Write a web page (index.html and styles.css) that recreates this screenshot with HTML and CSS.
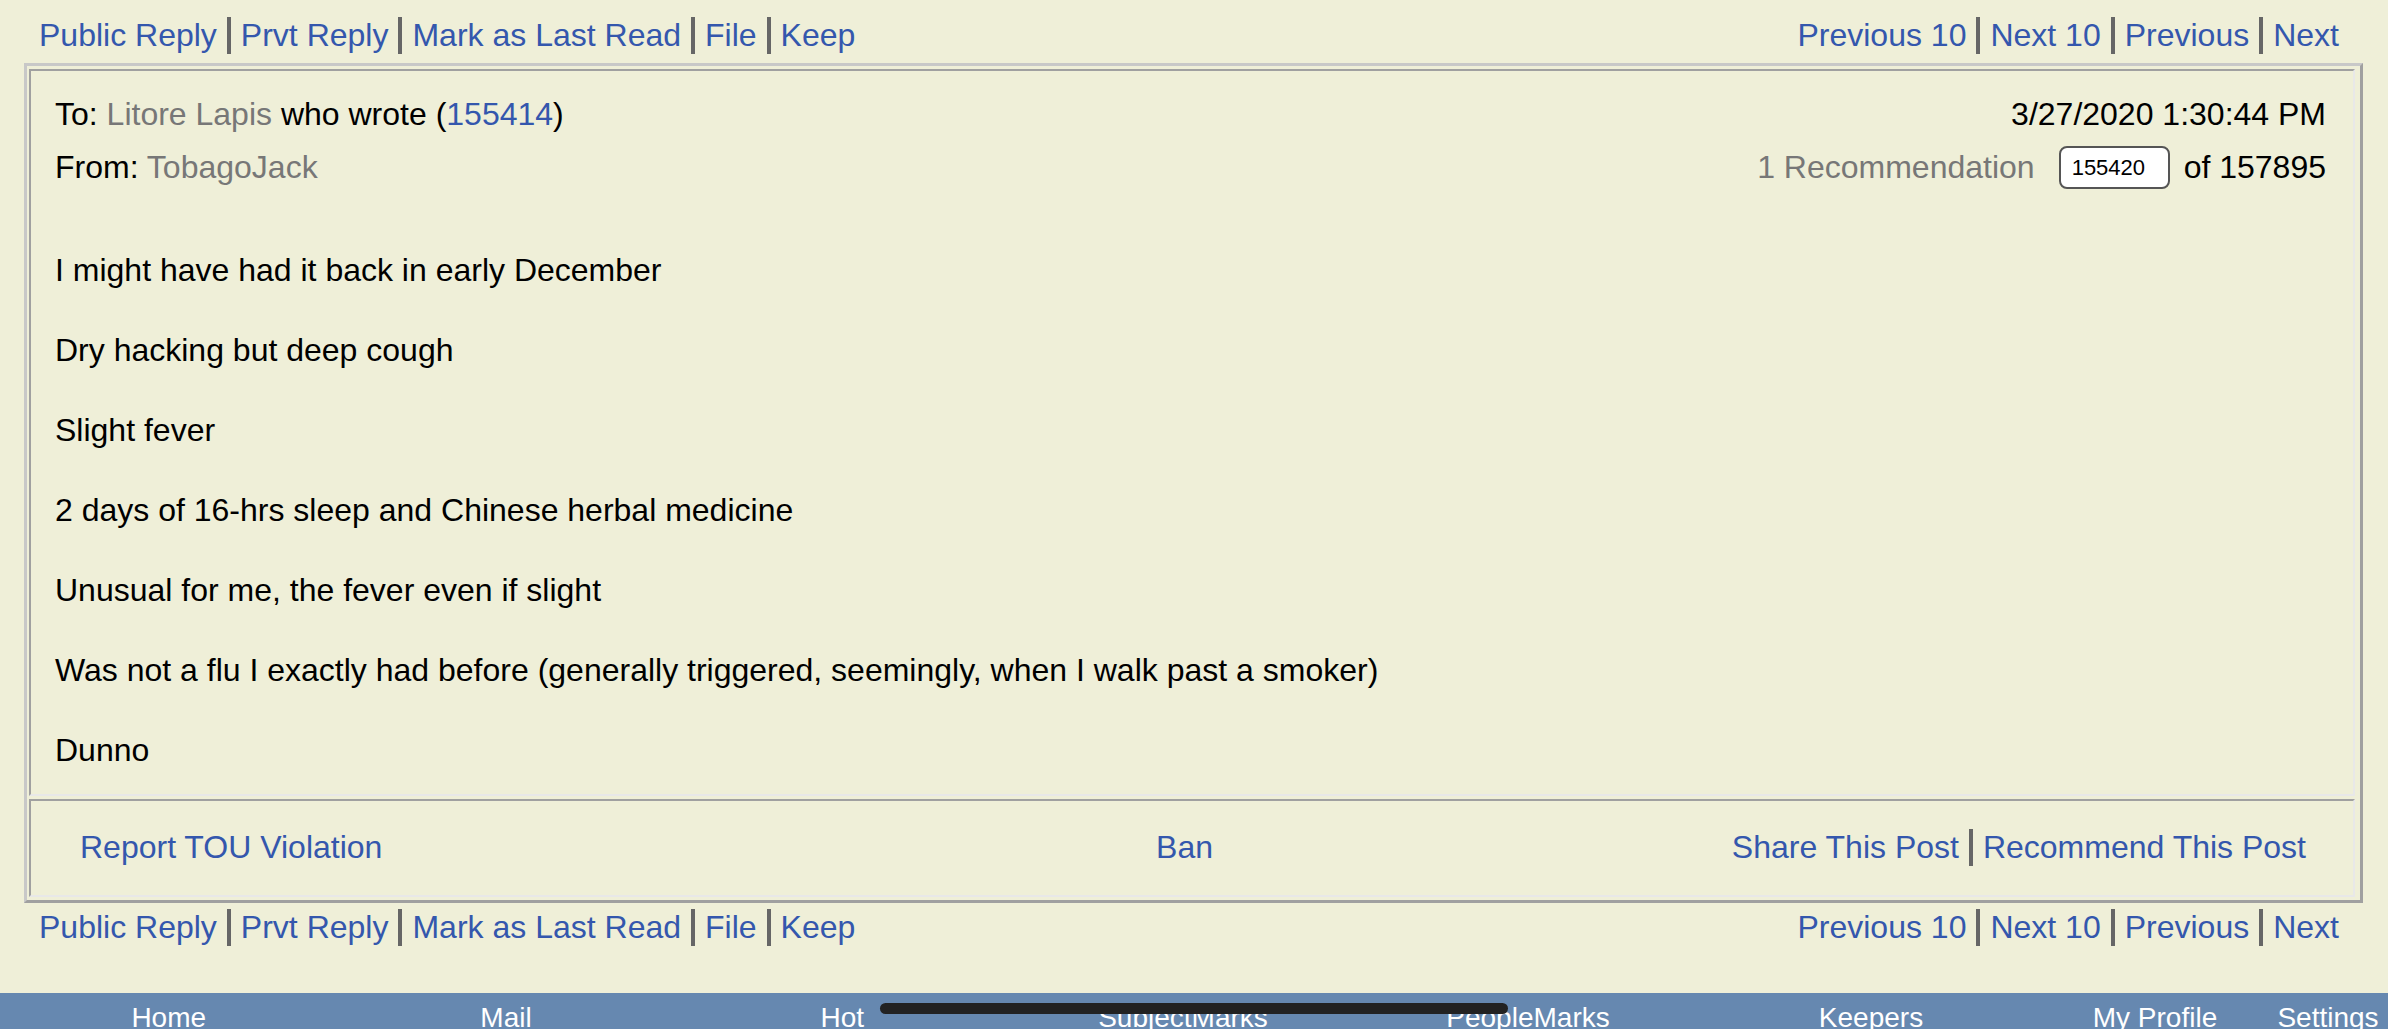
FILE: index.html
```html
<!DOCTYPE html>
<html>
<head>
<meta charset="utf-8">
<title>Post</title>
<link rel="stylesheet" href="styles.css">
</head>
<body>
<div class="linkbar top">
  <div class="links">
    <a href="#">Public Reply</a><span class="sep"></span><a href="#">Prvt Reply</a><span class="sep"></span><a href="#">Mark as Last Read</a><span class="sep"></span><a href="#">File</a><span class="sep"></span><a href="#">Keep</a>
  </div>
  <div class="links">
    <a href="#">Previous 10</a><span class="sep"></span><a href="#">Next 10</a><span class="sep"></span><a href="#">Previous</a><span class="sep"></span><a href="#">Next</a>
  </div>
</div>

<div class="post">
  <div class="cell msg">
    <div class="row r1">
      <div>To: <span class="name">Litore Lapis</span> who wrote (<a href="#">155414</a>)</div>
      <div>3/27/2020 1:30:44 PM</div>
    </div>
    <div class="row r2">
      <div>From: <span class="name">TobagoJack</span></div>
      <div class="meta"><span class="name">1 Recommendation</span><input class="num" type="text" value="155420"><span>of 157895</span></div>
    </div>
    <div class="body">
      <p>I might have had it back in early December</p>
      <p>Dry hacking but deep cough</p>
      <p>Slight fever</p>
      <p>2 days of 16-hrs sleep and Chinese herbal medicine</p>
      <p>Unusual for me, the fever even if slight</p>
      <p>Was not a flu I exactly had before (generally triggered, seemingly, when I walk past a smoker)</p>
      <p>Dunno</p>
    </div>
  </div>
  <div class="cell foot">
    <div class="fl"><a href="#">Report TOU Violation</a></div>
    <div class="fc"><a href="#">Ban</a></div>
    <div class="fr"><a href="#">Share This Post</a><span class="sep"></span><a href="#">Recommend This Post</a></div>
  </div>
</div>

<div class="linkbar bottom">
  <div class="links">
    <a href="#">Public Reply</a><span class="sep"></span><a href="#">Prvt Reply</a><span class="sep"></span><a href="#">Mark as Last Read</a><span class="sep"></span><a href="#">File</a><span class="sep"></span><a href="#">Keep</a>
  </div>
  <div class="links">
    <a href="#">Previous 10</a><span class="sep"></span><a href="#">Next 10</a><span class="sep"></span><a href="#">Previous</a><span class="sep"></span><a href="#">Next</a>
  </div>
</div>

<nav class="tabbar">
  <span>Home</span><span>Mail</span><span>Hot</span><span>SubjectMarks</span><span>PeopleMarks</span><span>Keepers</span><span>My Profile</span><span>Settings</span>
</nav>
<div class="home-indicator"></div>
</body>
</html>
```

FILE: styles.css
```css
html, body {
  margin: 0;
  padding: 0;
  overflow: hidden;
}

body {
  background: #efefd8;
  font-family: "Liberation Sans", Arial, sans-serif;
  font-size: 32px;
  line-height: 37px;
  color: #000;
  width: 2388px;
  height: 1029px;
  position: relative;
}

a {
  color: #3457ad;
  text-decoration: none;
}

.linkbar {
  display: flex;
  justify-content: space-between;
  padding: 17px 49px 9px 39px;
}

.linkbar.bottom {
  padding: 6px 49px 47px 39px;
}

.links {
  display: flex;
  align-items: flex-start;
}

.sep {
  display: inline-block;
  width: 4px;
  height: 37px;
  background: #666;
  margin: 0 10px;
}

.post {
  margin: 0 25px 0 24px;
  border: 3px solid;
  border-color: #c8c8c8 #a0a0a0 #a0a0a0 #c8c8c8;
  padding: 3px 5px 3px 2px;
  display: flex;
  flex-direction: column;
  gap: 3px;
}

.cell {
  border: 2px solid;
  border-color: #a0a0a0 #e8e8e8 #e8e8e8 #a0a0a0;
}

.msg {
  padding: 25px 27px 25px 24px;
}

.row {
  display: flex;
  justify-content: space-between;
  align-items: center;
}

.r1 {
  height: 37px;
}

.r2 {
  height: 43px;
  margin-top: 13px;
}

.name {
  color: #777;
}

.meta {
  display: flex;
  align-items: center;
}

.num {
  box-sizing: border-box;
  width: 111px;
  height: 43px;
  border: 2px solid #555;
  border-radius: 8px;
  background: #fff;
  font-family: "Liberation Sans", Arial, sans-serif;
  font-size: 22px;
  padding: 0 0 0 11px;
  margin: 0 14px 0 24px;
  color: #000;
  outline: none;
}

.body {
  margin-top: 63px;
}

.body p {
  margin: 0 0 43px;
}

.body p:last-child {
  margin-bottom: 0;
}

.foot {
  display: grid;
  grid-template-columns: 1fr 1fr 1fr;
  padding: 28px 47px 29px 49px;
}

.fc {
  justify-self: center;
  margin-right: 17px;
}

.fr {
  justify-self: end;
  display: flex;
}

.tabbar {
  display: grid;
  grid-template-columns: 337.5px 337px 335.5px 346px 344px 342px 226px 120px;
  background: #6688b0;
  height: 36px;
  overflow: hidden;
  padding-top: 9px;
  box-sizing: border-box;
  font-size: 28px;
  line-height: 32px;
  color: #fff;
}

.tabbar span {
  text-align: center;
  white-space: nowrap;
}

.home-indicator {
  position: absolute;
  left: 880px;
  top: 1003px;
  width: 628px;
  height: 11px;
  border-radius: 6px;
  background: #222;
}
```
